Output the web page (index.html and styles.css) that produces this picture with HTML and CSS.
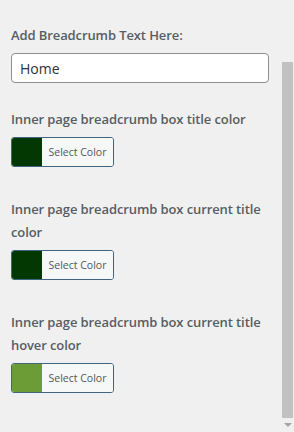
FILE: index.html
```html
<!DOCTYPE html>
<html lang="en">
<head>
    <meta charset="UTF-8">
    <meta name="viewport" content="width=device-width, initial-scale=1.0">
    <title>Breadcrumb settings</title>
    <link rel="stylesheet" href="styles.css">
</head>
<body>
    <div class="panel">
        <div class="control control-text">
            <label class="control-title" for="crumb-text">Add Breadcrumb Text Here:</label>
            <input class="text-input" id="crumb-text" type="text" value="Home">
        </div>

        <div class="control control-color">
            <span class="control-title">Inner page breadcrumb box title color</span>
            <button class="color-result" type="button">
                <span class="swatch swatch-dark"></span>
                <span class="color-text">Select Color</span>
            </button>
        </div>

        <div class="control control-color">
            <span class="control-title">Inner page breadcrumb box current title color</span>
            <button class="color-result" type="button">
                <span class="swatch swatch-dark"></span>
                <span class="color-text">Select Color</span>
            </button>
        </div>

        <div class="control control-color">
            <span class="control-title">Inner page breadcrumb box current title hover color</span>
            <button class="color-result" type="button">
                <span class="swatch swatch-green"></span>
                <span class="color-text">Select Color</span>
            </button>
        </div>
    </div>

    <div class="scrollbar">
        <div class="scroll-thumb"></div>
        <div class="scroll-arrow"></div>
    </div>
</body>
</html>
```

FILE: styles.css
```css
html, body {
    height: 100%;
}

body {
    margin: 0;
    background: #f0f0f1;
    font-family: "Open Sans", "Noto Sans", sans-serif;
    color: #50575e;
    display: flex;
    overflow: hidden;
}

.panel {
    flex: 1;
    padding: 24px 13px 0 11px;
}

.control {
    display: flex;
    flex-direction: column;
    align-items: flex-start;
}

.control-text {
    margin-bottom: 25px;
}

.control-color {
    margin-bottom: 31px;
}

.control-title {
    font-size: 13px;
    font-weight: 600;
    line-height: 23px;
    margin-bottom: 6px;
    letter-spacing: -0.1px;
    color: #575d63;
}

.text-input {
    box-sizing: border-box;
    width: 100%;
    height: 30px;
    margin: 0;
    padding: 0 8px;
    border: 1px solid #8c8f94;
    border-radius: 4px;
    background: #fff;
    color: #2c3338;
    font-family: inherit;
    font-size: 14px;
}

.color-result {
    display: flex;
    height: 30px;
    width: 103px;
    box-sizing: border-box;
    padding: 0;
    margin: 0;
    border: 1px solid #3f6583;
    border-radius: 3px;
    overflow: hidden;
    background: #f6f7f7;
    cursor: pointer;
}

.swatch {
    width: 30px;
    height: 100%;
}

.swatch-dark {
    background: #033803;
}

.swatch-green {
    background: #6c9c36;
}

.color-text {
    flex: 1;
    align-self: stretch;
    display: flex;
    align-items: center;
    justify-content: center;
    font-family: "Open Sans", "Noto Sans", sans-serif;
    font-size: 10.5px;
    color: #50575e;
    background: #f6f7f7;
}

.scrollbar {
    width: 11px;
    margin-right: 1px;
    display: flex;
    flex-direction: column;
    padding-top: 62px;
}

.scroll-thumb {
    flex: 1;
    background: #c1c1c1;
}

.scroll-arrow {
    height: 14px;
    display: flex;
    align-items: center;
    justify-content: center;
}

.scroll-arrow::before {
    content: "";
    border-left: 4px solid transparent;
    border-right: 4px solid transparent;
    border-top: 4px solid #a3a3a3;
}
```
